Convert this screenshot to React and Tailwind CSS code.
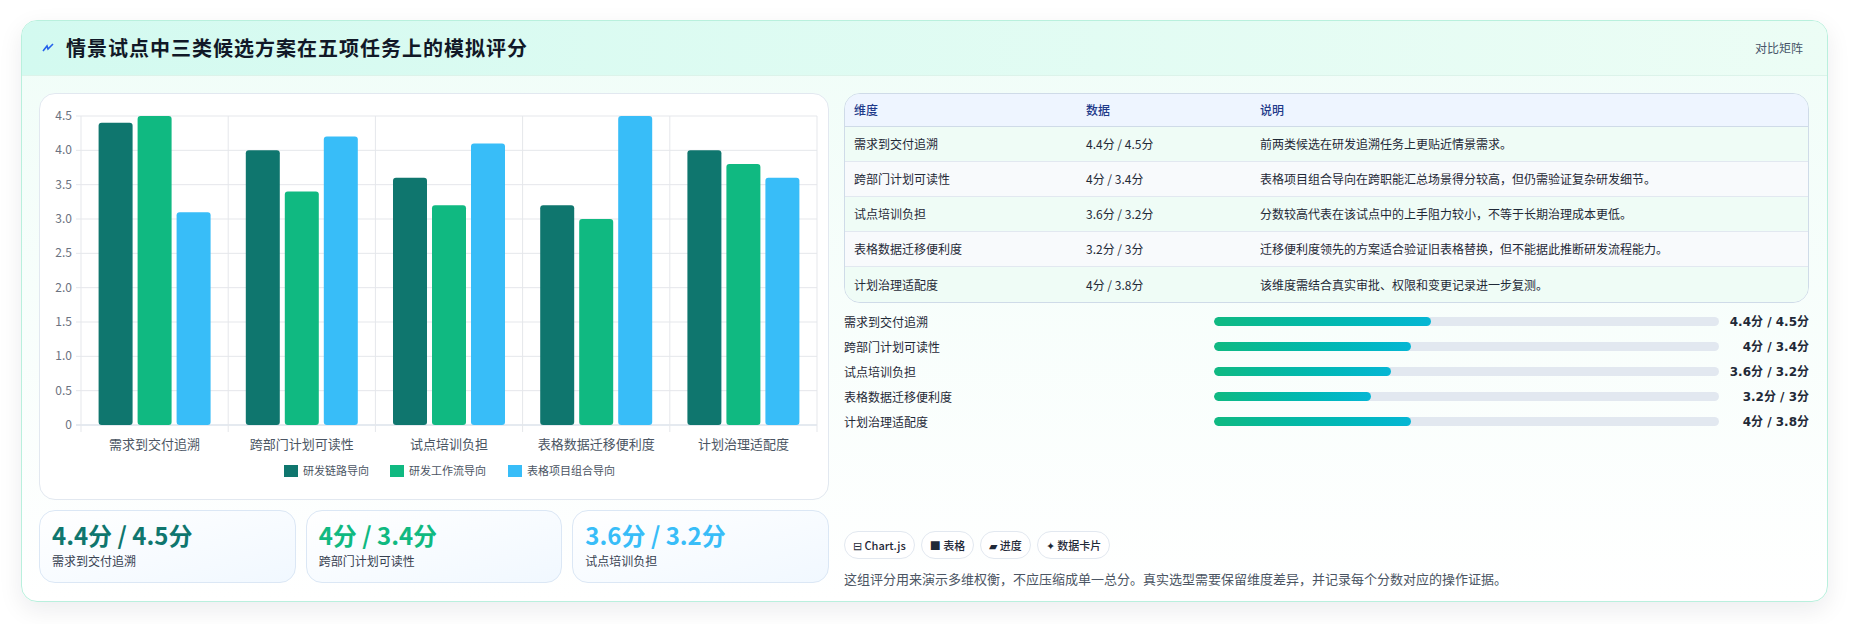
import React from 'react';

const series = [
  { name: '研发链路导向', color: '#0f766e' },
  { name: '研发工作流导向', color: '#10b981' },
  { name: '表格项目组合导向', color: '#38bdf8' },
];

const rows = [
  { label: '需求到交付追溯', vals: [4.4, 4.5, 3.1], data: '4.4分 / 4.5分', note: '前两类候选在研发追溯任务上更贴近情景需求。', pct: 43 },
  { label: '跨部门计划可读性', vals: [4.0, 3.4, 4.2], data: '4分 / 3.4分', note: '表格项目组合导向在跨职能汇总场景得分较高，但仍需验证复杂研发细节。', pct: 39 },
  { label: '试点培训负担', vals: [3.6, 3.2, 4.1], data: '3.6分 / 3.2分', note: '分数较高代表在该试点中的上手阻力较小，不等于长期治理成本更低。', pct: 35 },
  { label: '表格数据迁移便利度', vals: [3.2, 3.0, 4.5], data: '3.2分 / 3分', note: '迁移便利度领先的方案适合验证旧表格替换，但不能据此推断研发流程能力。', pct: 31 },
  { label: '计划治理适配度', vals: [4.0, 3.8, 3.6], data: '4分 / 3.8分', note: '该维度需结合真实审批、权限和变更记录进一步复测。', pct: 39 },
];

const font = { fontFamily: '"Noto Sans CJK SC", "Noto Sans", sans-serif' };

function BarChart() {
  const x0 = 41, x1 = 777, yTop = 22, yBot = 331;
  const cw = (x1 - x0) / 5;
  const unit = (yBot - yTop) / 4.5;
  const bw = 34, gap = 5;
  const off = (cw - (bw * 3 + gap * 2)) / 2;
  const ticks = [4.5, 4, 3.5, 3, 2.5, 2, 1.5, 1, 0.5, 0];
  return (
    <svg width="788" height="405" style={font}>
      {ticks.map((t) => {
        const y = yBot - t * unit;
        return (
          <g key={t}>
            <line x1={x0 - 5} x2={x1} y1={y} y2={y} stroke={t === 0 ? '#cbd5e1' : '#e5e7eb'} />
            <text x={x0 - 9} y={y + 4} textAnchor="end" fontSize="12" fill="#6b7280">
              {t === 0 ? '0' : t.toFixed(1)}
            </text>
          </g>
        );
      })}
      {[0, 1, 2, 3, 4, 5].map((i) => (
        <line key={i} x1={x0 + i * cw} x2={x0 + i * cw} y1={yTop} y2={yBot + 7} stroke="#e5e7eb" />
      ))}
      {rows.map((r, i) => (
        <g key={r.label}>
          {r.vals.map((v, j) => {
            const h = v * unit;
            return (
              <rect key={j} x={x0 + i * cw + off + j * (bw + gap)} y={yBot - h} width={bw} height={h}
                rx="3" fill={series[j].color} />
            );
          })}
          <text x={x0 + i * cw + cw / 2} y={355} textAnchor="middle" fontSize="13" fill="#4b5563">{r.label}</text>
        </g>
      ))}
      <g>
        {[
          { x: 244, w: 100 },
          { x: 350, w: 112 },
          { x: 468, w: 120 },
        ].map((l, i) => (
          <g key={i}>
            <rect x={l.x} y={371} width="14" height="12" fill={series[i].color} />
            <text x={l.x + 19} y={381} fontSize="11" fill="#4b5563">{series[i].name}</text>
          </g>
        ))}
      </g>
    </svg>
  );
}

export default function App() {
  return (
    <div className="w-[1849px] h-[624px] bg-white pt-[20px] pl-[21px]" style={font}>
      <div className="w-[1807px] h-[582px] rounded-2xl border border-[#b9f0dd] bg-gradient-to-b from-[#f0fdf8] to-white shadow-[0_8px_24px_rgba(15,23,42,0.08)] overflow-hidden">
        <div className="h-[55px] flex items-center justify-between px-5 bg-gradient-to-r from-[#d3faf0] to-[#ecfdf5] border-b border-[#dcf3ea]">
          <div className="flex items-center gap-3">
            <svg width="12" height="10" viewBox="0 0 12 10">
              <path d="M1 8 L5 3 L6 6 L11 1" stroke="#2563eb" strokeWidth="1.6" fill="none" />
            </svg>
            <span className="text-[20px] font-bold text-[#111827] tracking-[1px]">情景试点中三类候选方案在五项任务上的模拟评分</span>
          </div>
          <span className="text-[12px] text-[#475569] pr-1">对比矩阵</span>
        </div>

        <div className="flex gap-[15px] px-[17px] pt-[17px]">
          <div className="w-[790px] flex flex-col gap-[10px]">
            <div className="h-[407px] rounded-2xl border border-[#e2e8f0] bg-white">
              <BarChart />
            </div>
            <div className="grid grid-cols-3 gap-[10px]">
              {rows.slice(0, 3).map((r, i) => (
                <div key={r.label} className="h-[73px] rounded-2xl border border-[#dbe7f5] bg-gradient-to-br from-white to-[#f1f8ff] px-3 pt-[8px]">
                  <div className="text-[24px] font-bold leading-8" style={{ color: series[i].color }}>{r.data}</div>
                  <div className="text-[12px] text-[#374151] mt-[1px]">{r.label}</div>
                </div>
              ))}
            </div>
          </div>

          <div className="w-[965px] flex flex-col">
            <div className="rounded-2xl border border-[#cfdbe8] overflow-hidden text-[12px]">
              <div className="h-[33px] flex items-center bg-[#eef5ff] border-b border-[#cfdbe8] text-[#1e3a8a] font-medium">
                <div className="w-[241px] pl-[9px]">维度</div>
                <div className="w-[174px]">数据</div>
                <div>说明</div>
              </div>
              {rows.map((r, i) => (
                <div key={r.label} className={`h-[35px] flex items-center text-[#1f2937] ${i < 4 ? 'border-b border-[#e2e8f0]' : ''} ${i % 2 === 0 ? 'bg-[#effcf6]' : 'bg-[#f8fafc]'}`}>
                  <div className="w-[241px] pl-[9px]">{r.label}</div>
                  <div className="w-[174px]">{r.data}</div>
                  <div>{r.note}</div>
                </div>
              ))}
            </div>

            <div className="flex flex-col gap-[12px] mt-[12px]">
              {rows.map((r) => (
                <div key={r.label} className="h-[13px] flex items-center text-[12px]">
                  <div className="w-[370px] text-[#1f2937]">{r.label}</div>
                  <div className="flex-1 h-[9px] rounded-full bg-[#e2e8f0] overflow-hidden">
                    <div className="h-full rounded-full bg-gradient-to-r from-[#10b981] to-[#06b6d4]" style={{ width: `${r.pct}%` }} />
                  </div>
                  <div className="w-[90px] text-right font-bold text-[#1f2937]" style={{ fontFamily: '"DejaVu Sans", "Noto Sans CJK SC", sans-serif' }}>{r.data}</div>
                </div>
              ))}
            </div>

            <div className="flex gap-[6px] mt-[103px]">
              {['⊟ Chart.js', '■ 表格', '▰ 进度', '✦ 数据卡片'].map((c) => (
                <span key={c} className="h-[28px] px-[8px] flex items-center rounded-full border border-[#e2e8f0] bg-white text-[11px] font-medium text-[#1f2937]">{c}</span>
              ))}
            </div>
            <div className="mt-[10px] text-[13px] text-[#4b5563]">这组评分用来演示多维权衡，不应压缩成单一总分。真实选型需要保留维度差异，并记录每个分数对应的操作证据。</div>
          </div>
        </div>
      </div>
    </div>
  );
}
